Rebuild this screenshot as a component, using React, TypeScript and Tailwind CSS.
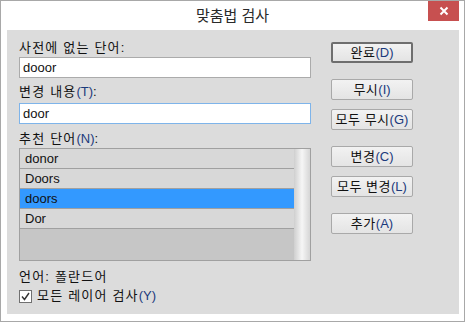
import React from "react";

const font = "font-['Liberation_Sans','Noto_Sans_CJK_KR',sans-serif]";

const Mn = ({ k }: { k: string }) => <span className="text-[#1b3a7c] tracking-normal">({k})</span>;

const Btn = ({
  label,
  k,
  primary,
  className = "",
}: {
  label: string;
  k: string;
  primary?: boolean;
  className?: string;
}) => (
  <button
    className={`w-[82px] h-[21px] rounded-[2px] bg-gradient-to-b from-[#f2f2f2] to-[#e4e4e4] text-[13px] leading-none text-[#111] flex items-center justify-center tracking-[0.5px] ${
      primary ? "border-2 border-[#6e6e6e]" : "border border-[#a9a9a9]"
    } ${className}`}
  >
    {label}
    <Mn k={k} />
  </button>
);

const suggestions = ["donor", "Doors", "doors", "Dor"];

export default function App() {
  return (
    <div className={`w-[465px] h-[322px] bg-white border border-[#a8a8a8] flex flex-col ${font}`}>
      {/* Title bar */}
      <div className="relative h-[29px] flex items-center justify-center">
        <span className="text-[15px] text-[#2a2a2a] mt-[1px]">맞춤법 검사</span>
        <div className="absolute top-0 right-[5px] w-[31px] h-[20px] bg-[#c75050] flex items-center justify-center">
          <svg width="10" height="10" viewBox="0 0 10 10">
            <path d="M1.5 1.5 L8.5 8.5 M8.5 1.5 L1.5 8.5" stroke="white" strokeWidth="2" />
          </svg>
        </div>
      </div>

      {/* Body */}
      <div className="ml-[6px] mr-[5px] h-[284px] bg-[#dcdcdc] flex">
        {/* Left column */}
        <div className="pl-[12px] pt-[10px] w-[304px] flex flex-col text-[13px] text-[#111]">
          <div className="h-[16px] leading-[16px] tracking-[1.2px]">사전에 없는 단어:</div>
          <div className="mt-[1px] h-[21px] bg-white border border-[#ababab] px-[3px] flex items-center">
            dooor
          </div>

          <div className="mt-[6px] h-[16px] leading-[16px] tracking-[1.2px]">
            변경 내용<Mn k="T" />:
          </div>
          <div className="mt-[3px] h-[21px] bg-white border border-[#7eb4ea] px-[3px] flex items-center">
            door
          </div>

          <div className="mt-[7px] h-[16px] leading-[16px] tracking-[1.2px]">
            추천 단어<Mn k="N" />:
          </div>
          <div className="mt-[1px] h-[113px] border border-[#a0a0a0] flex">
            <div className="flex-1 flex flex-col bg-[#c6c6c6]">
              {suggestions.map((s, i) => (
                <div
                  key={s}
                  className={`h-[20px] border-b border-[#a0a0a0] pl-[5px] flex items-center ${
                    i === 2 ? "bg-[#3399ff]" : "bg-[#d8d8d8]"
                  }`}
                >
                  {s}
                </div>
              ))}
            </div>
            <div className="w-[16px] bg-gradient-to-r from-[#cfcfcf] via-[#f6f6f6] to-[#d6d6d6]" />
          </div>

          <div className="mt-[8px] h-[16px] leading-[16px] tracking-[1.2px]">언어: 폴란드어</div>
          <div className="mt-[2px] h-[18px] flex items-center gap-[5px]">
            <div className="w-[13px] h-[13px] bg-white border border-[#707070] flex items-center justify-center">
              <svg width="9" height="9" viewBox="0 0 9 9">
                <path d="M1 4.5 L3.5 7.5 L8 1" stroke="#333" strokeWidth="1.4" fill="none" />
              </svg>
            </div>
            <span className="tracking-[1.2px]">
              모든 레이어 검사<Mn k="Y" />
            </span>
          </div>
        </div>

        {/* Right column */}
        <div className="ml-[20px] pt-[12px] flex flex-col">
          <Btn label="완료" k="D" primary />
          <Btn label="무시" k="I" className="mt-[16px]" />
          <Btn label="모두 무시" k="G" className="mt-[9px]" />
          <Btn label="변경" k="C" className="mt-[16px]" />
          <Btn label="모두 변경" k="L" className="mt-[9px]" />
          <Btn label="추가" k="A" className="mt-[16px]" />
        </div>
      </div>
    </div>
  );
}
